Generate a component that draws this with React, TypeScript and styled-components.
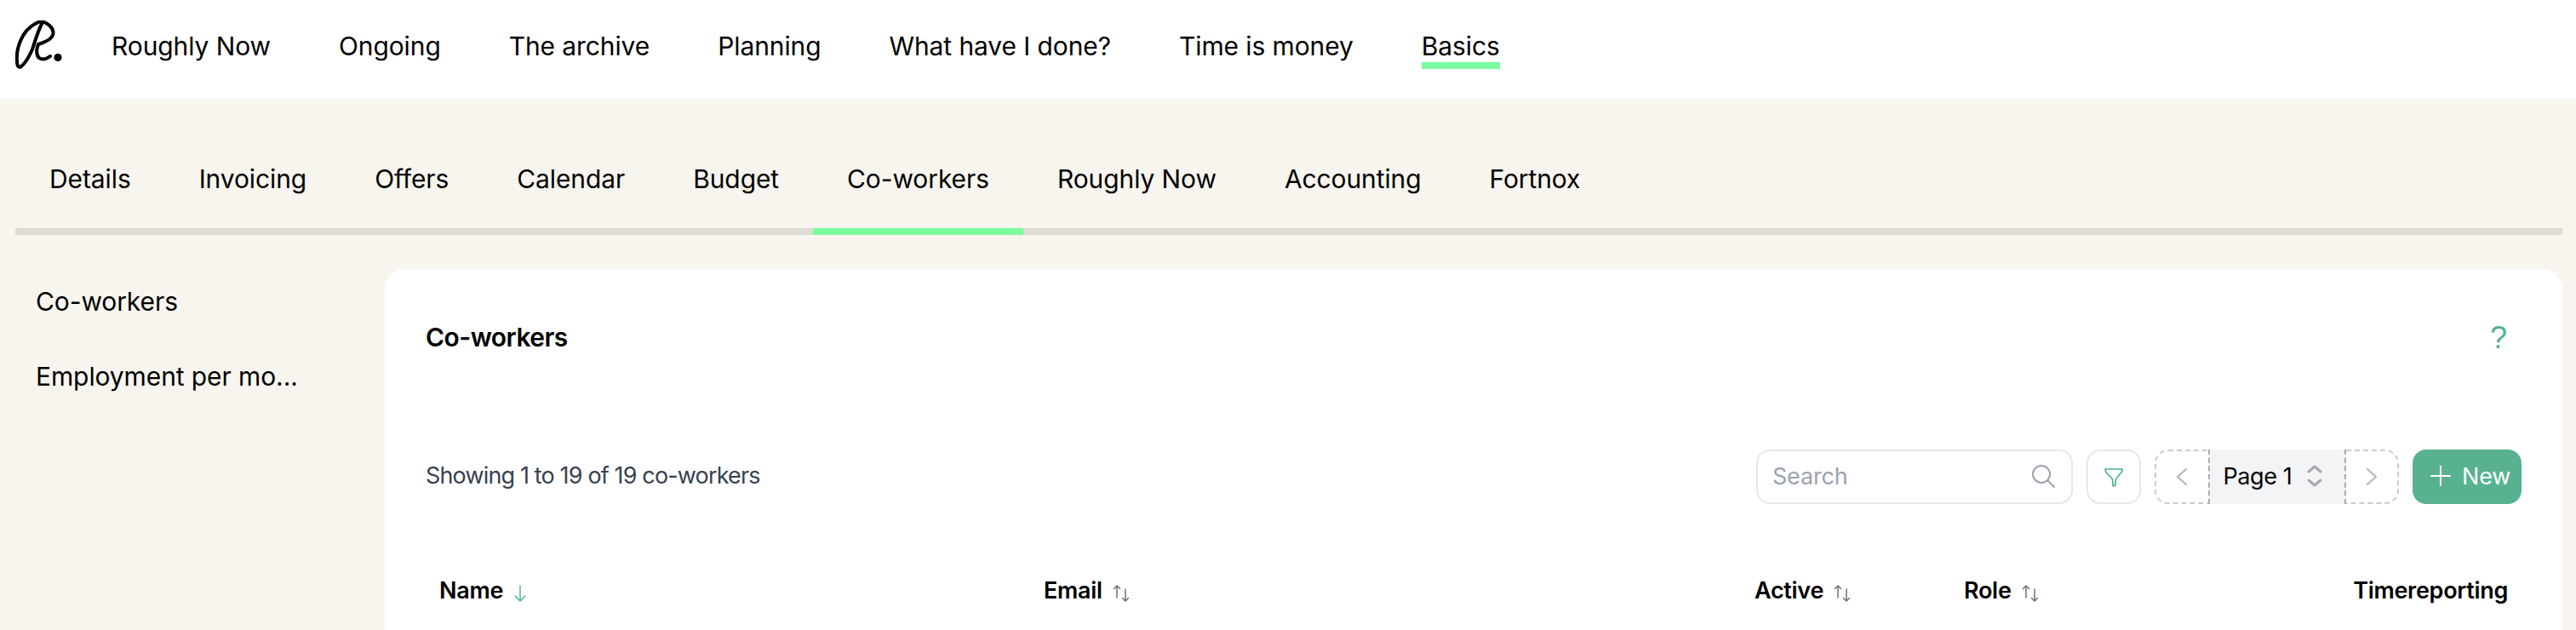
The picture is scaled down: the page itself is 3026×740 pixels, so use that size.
import React from 'react';
import styled, { createGlobalStyle } from 'styled-components';

const GlobalStyle = createGlobalStyle`
  html, body {
    margin: 0;
    height: 740px;
    overflow: hidden;
    background: #f7f5ee;
    font-family: Inter, "Liberation Sans", sans-serif;
    color: #000;
  }
`;

const Header = styled.header`
  height: 114px;
  padding: 2px 0 0 18px;
  background: #fff;
  display: flex;
  align-items: center;
`;

const Logo = styled.svg`
  width: 60px;
  height: 60px;
  margin: 22px 53px 0 0;
  align-self: flex-start;
  flex: none;
`;

const MainNav = styled.nav`
  display: flex;
  gap: 80px;
`;

const MainLink = styled.a<{ $active?: boolean }>`
  padding-bottom: 2px;
  font-size: 30px;
  line-height: 34px;
  letter-spacing: -0.1px;
  white-space: nowrap;
  border-bottom: 8px solid ${(p) => (p.$active ? '#7afc9f' : 'transparent')};
`;

const TabBar = styled.div`
  display: flex;
  margin: 77px 16px 0 18px;
  border-bottom: 8px solid #dedbd4;
`;

const Tab = styled.a<{ $active?: boolean }>`
  padding: 0 40px 41px;
  margin-bottom: -8px;
  font-size: 30px;
  line-height: 34px;
  letter-spacing: -0.1px;
  white-space: nowrap;
  border-bottom: 8px solid ${(p) => (p.$active ? '#7afc9f' : 'transparent')};
`;

const Body = styled.div`
  display: flex;
  padding: 35px 16px 0 18px;
`;

const Sidebar = styled.aside`
  width: 434px;
  flex: none;
`;

const SideItem = styled.a`
  display: block;
  padding: 26px 24px 28px;
  font-size: 30px;
  line-height: 34px;
  letter-spacing: -0.1px;
  white-space: nowrap;
`;

const Card = styled.main`
  flex: 1;
  box-sizing: border-box;
  height: 424px;
  margin-top: 5px;
  padding: 63px 48px 0;
  background: #fff;
  border-radius: 24px 24px 0 0;
`;

const TitleRow = styled.div`
  display: flex;
  justify-content: space-between;
  align-items: flex-start;
  height: 36px;
`;

const Title = styled.h2`
  margin: 0;
  font-size: 30px;
  line-height: 34px;
  font-weight: 600;
  letter-spacing: -0.55px;
`;

const Help = styled.span`
  margin-right: 17px;
  font-family: "Liberation Sans", sans-serif;
  font-size: 36px;
  line-height: 36px;
  color: #4db38c;
`;

const Toolbar = styled.div`
  display: flex;
  justify-content: space-between;
  align-items: center;
  margin-top: 113px;
`;

const Summary = styled.p`
  margin: 0;
  padding-bottom: 2px;
  font-size: 27px;
  line-height: 34px;
  letter-spacing: -0.85px;
  color: #374151;
`;

const Controls = styled.div`
  display: flex;
  gap: 16px;
`;

const Search = styled.div`
  width: 372px;
  height: 64px;
  box-sizing: border-box;
  display: flex;
  align-items: center;
  justify-content: space-between;
  padding: 0 18px 2px 17px;
  border: 2px solid #e5e7eb;
  border-radius: 16px;
  font-size: 27px;
  letter-spacing: -0.2px;
  color: #9ca3af;
`;

const FilterButton = styled.button`
  width: 64px;
  height: 64px;
  padding: 0;
  display: flex;
  align-items: center;
  justify-content: center;
  background: #fff;
  border: 2px solid #e5e7eb;
  border-radius: 16px;
`;

const Pager = styled.div`
  width: 287px;
  height: 64px;
  box-sizing: border-box;
  display: flex;
  align-items: stretch;
  border: 2px dashed #c9cacf;
  border-radius: 16px;
`;

const PagerArrow = styled.div`
  flex: 1;
  display: flex;
  align-items: center;
  justify-content: center;
`;

const PageSelect = styled.div`
  width: 162px;
  box-sizing: border-box;
  margin: -2px 0;
  display: flex;
  align-items: center;
  gap: 18px;
  padding: 0 0 2px 16px;
  background: #f3f4f6;
  border-left: 2px dashed #a9abb1;
  border-right: 2px dashed #a9abb1;
  font-size: 27px;
  letter-spacing: -0.4px;
  white-space: nowrap;
`;

const NewButton = styled.button`
  width: 128px;
  height: 64px;
  padding: 0 0 2px 21px;
  display: flex;
  align-items: center;
  gap: 13px;
  background: #58b28f;
  border: 0;
  border-radius: 16px;
  color: #fff;
  font-family: inherit;
  font-size: 27px;
  letter-spacing: -0.2px;
`;

const TableHead = styled.div`
  display: grid;
  grid-template-columns: 710px 835px 246px 1fr 1fr;
  margin-top: 85px;
`;

const HeadCell = styled.div<{ $right?: boolean }>`
  display: flex;
  align-items: flex-start;
  justify-content: ${(p) => (p.$right ? 'flex-end' : 'flex-start')};
  gap: 12px;
  padding: 0 16px;
  font-size: 27px;
  line-height: 34px;
  font-weight: 600;
  letter-spacing: -0.3px;
  white-space: nowrap;
`;

const Icon = styled.svg`
  flex: none;
  display: block;
  fill: none;
  stroke-linecap: round;
  stroke-linejoin: round;
`;

const HeadIcon = styled(Icon)`
  margin-top: 10px;
`;

const mainLinks = ['Roughly Now', 'Ongoing', 'The archive', 'Planning', 'What have I done?', 'Time is money', 'Basics'];
const tabs = ['Details', 'Invoicing', 'Offers', 'Calendar', 'Budget', 'Co-workers', 'Roughly Now', 'Accounting', 'Fortnox'];

const SortBoth = () => (
  <HeadIcon width="20" height="20" viewBox="0 0 20 20" stroke="#6b7280" strokeWidth="1.5">
    <path d="M5 15V1M1.5 4.5 5 1l3.5 3.5M15 5v14M11.5 15.5 15 19l3.5-3.5" />
  </HeadIcon>
);

export default function App() {
  return (
    <>
      <GlobalStyle />
      <Header>
        <Logo viewBox="18 24 60 60">
          <g fill="none" stroke="#000" strokeWidth="4" strokeLinecap="round" strokeLinejoin="round">
            <path d="M49 25C42 26 32 33 27 42C22 51 19 62 20 72C20 78 22 80 25 78C30 74 34 67 38 58C41 49 44 38 49 28" />
            <path d="M49 25C56 27 62 32 62.5 38C63 45 55 49 45 52C42 58 43 66 46 68C50 71 55 69 59 66" />
          </g>
          <circle cx="68" cy="67.5" r="4.6" fill="#000" />
        </Logo>
        <MainNav>
          {mainLinks.map((l) => (
            <MainLink key={l} $active={l === 'Basics'}>{l}</MainLink>
          ))}
        </MainNav>
      </Header>
      <TabBar>
        {tabs.map((t) => (
          <Tab key={t} $active={t === 'Co-workers'}>{t}</Tab>
        ))}
      </TabBar>
      <Body>
        <Sidebar>
          <SideItem>Co-workers</SideItem>
          <SideItem>Employment per mo...</SideItem>
        </Sidebar>
        <Card>
          <TitleRow>
            <Title>Co-workers</Title>
            <Help>?</Help>
          </TitleRow>
          <Toolbar>
            <Summary>Showing 1 to 19 of 19 co-workers</Summary>
            <Controls>
              <Search>
                Search
                <Icon width="30" height="30" viewBox="0 0 30 30" stroke="#9ca3af" strokeWidth="2">
                  <circle cx="13" cy="13" r="10" />
                  <path d="M20.5 20.5 28 28" />
                </Icon>
              </Search>
              <FilterButton aria-label="Filter">
                <Icon width="24" height="24" viewBox="0 0 24 24" stroke="#4db38c" strokeWidth="1.7">
                  <path d="M2 3h20c.6 2-1 4-3 6l-4 5c-1 1-1 5-1 8l-3 1c0-3 0-7-1-9L4 8C3 7 2 5 2 3Z" />
                </Icon>
              </FilterButton>
              <Pager>
                <PagerArrow>
                  <Icon width="14" height="20" viewBox="0 0 14 20" stroke="#b0b3ba" strokeWidth="2">
                    <path d="M12 1 2 10l10 9" />
                  </Icon>
                </PagerArrow>
                <PageSelect>
                  Page 1
                  <Icon width="18" height="26" viewBox="0 0 18 26" stroke="#a6a9b1" strokeWidth="3">
                    <path d="m2 8 7-6 7 6M2 18l7 6 7-6" />
                  </Icon>
                </PageSelect>
                <PagerArrow>
                  <Icon width="14" height="20" viewBox="0 0 14 20" stroke="#b0b3ba" strokeWidth="2">
                    <path d="m2 1 10 9-10 9" />
                  </Icon>
                </PagerArrow>
              </Pager>
              <NewButton>
                <Icon width="24" height="24" viewBox="0 0 24 24" stroke="#fff" strokeWidth="2">
                  <path d="M12 1v22M1 12h22" />
                </Icon>
                New
              </NewButton>
            </Controls>
          </Toolbar>
          <TableHead>
            <HeadCell>
              Name
              <HeadIcon width="16" height="20" viewBox="0 0 16 20" stroke="#58b28f" strokeWidth="1.5">
                <path d="M8 1v18M2 13l6 6 6-6" />
              </HeadIcon>
            </HeadCell>
            <HeadCell>Email <SortBoth /></HeadCell>
            <HeadCell>Active <SortBoth /></HeadCell>
            <HeadCell>Role <SortBoth /></HeadCell>
            <HeadCell $right>Timereporting</HeadCell>
          </TableHead>
        </Card>
      </Body>
    </>
  );
}
